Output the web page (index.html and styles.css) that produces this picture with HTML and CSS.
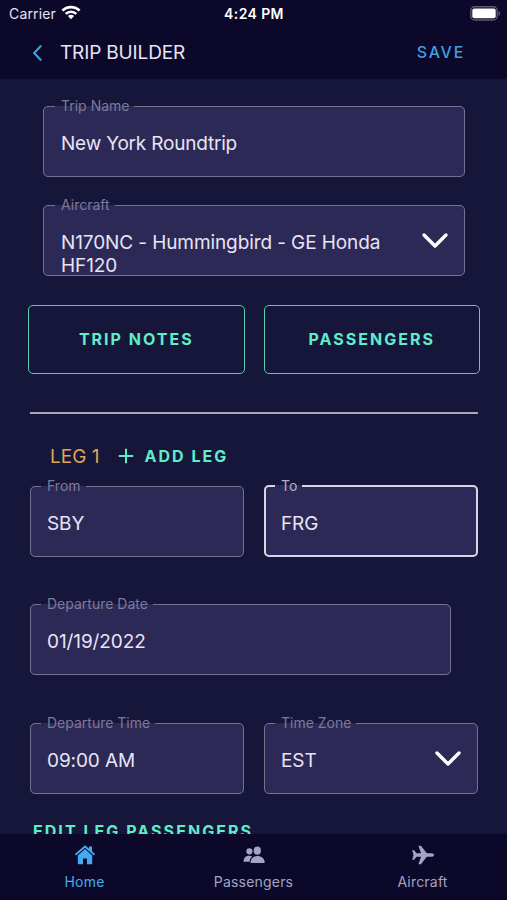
FILE: index.html
```html
<!DOCTYPE html>
<html lang="en">
<head>
<meta charset="utf-8">
<title>Trip Builder</title>
<link rel="stylesheet" href="styles.css">
</head>
<body>
<div class="app">
  <div class="status">
    <div class="carrier"><span>Carrier</span>
      <svg class="wifi" width="20" height="15" viewBox="0 0 20 15"><g fill="none" stroke="#fff" stroke-width="2.7"><path d="M1.400 5.600a12.300 12.300 0 0 1 17.200 0"/><path d="M4.700 8.900a7.600 7.600 0 0 1 10.600 0"/></g><path fill="#fff" d="M6.900 11.100a4.500 4.500 0 0 1 6.200 0L10 14.300z"/></svg>
    </div>
    <div class="clock">4:24 PM</div>
    <svg class="battery" width="31" height="15" viewBox="0 0 31 15"><rect x=".8" y=".8" width="26.400" height="13.200" rx="4" fill="none" stroke="#5c5a70" stroke-width="1.400"/><rect x="2.300" y="2.500" width="23.400" height="9.800" rx="2" fill="#fff"/><path d="M28.500 5v5c1-.5 1.600-1.400 1.600-2.500s-.6-2-1.600-2.500z" fill="#5c5a70"/></svg>
  </div>
  <header class="header">
    <svg class="back" width="12" height="18" viewBox="0 0 12 18"><path d="M10.200 1.500 3.200 9l7 7.500" fill="none" stroke="#3f9fe0" stroke-width="2.100"/></svg>
    <h1 class="title">TRIP BUILDER</h1>
    <span class="save">SAVE</span>
  </header>
  <main class="content">
    <div class="general">
      <fieldset class="field"><legend>Trip Name</legend><div class="value name">New York Roundtrip</div></fieldset>
      <fieldset class="field"><legend>Aircraft</legend><div class="value craft">N170NC - Hummingbird - GE Honda HF120</div>
        <svg class="chevron" width="28" height="18" viewBox="0 0 28 18"><path d="M3 3 14 14 25 3" fill="none" stroke="#fff" stroke-width="3.400" stroke-linecap="round" stroke-linejoin="round"/></svg></fieldset>
    </div>
    <div class="actions"><button class="btn notes">TRIP NOTES</button><button class="btn pax">PASSENGERS</button></div>
    <hr class="rule">
    <div class="leghead"><span class="leg">LEG 1</span>
      <svg class="plus" width="16" height="16" viewBox="0 0 16 16"><path d="M8 .8v14.400M.8 8h14.400" stroke="#5eeec6" stroke-width="2"/></svg>
      <span class="add">ADD LEG</span></div>
    <div class="row">
      <fieldset class="field"><legend>From</legend><div class="value">SBY</div></fieldset>
      <fieldset class="field focused"><legend>To</legend><div class="value">FRG</div></fieldset>
    </div>
    <div class="row single">
      <fieldset class="field"><legend>Departure Date</legend><div class="value date">01/19/2022</div></fieldset>
    </div>
    <div class="row">
      <fieldset class="field"><legend>Departure Time</legend><div class="value time">09:00 AM</div></fieldset>
      <fieldset class="field"><legend>Time Zone</legend><div class="value">EST</div>
        <svg class="chevron" width="28" height="18" viewBox="0 0 28 18"><path d="M3 3 14 14 25 3" fill="none" stroke="#fff" stroke-width="3.400" stroke-linecap="round" stroke-linejoin="round"/></svg></fieldset>
    </div>
    <div class="edit">EDIT LEG PASSENGERS</div>
  </main>
  <nav class="tabs">
    <div class="tab active">
      <svg width="22" height="20" viewBox="0 0 22 20"><path fill="currentColor" d="M11 4.100 18.200 10.500v7.900q0 .8-.8.8H13v-5.700H9v5.700H4.600q-.8 0-.8-.8v-7.900zM15 1.500h3v6l-3-2.700z"/><path d="M1.500 9.800 11 1.500l9.500 8.300" fill="none" stroke="currentColor" stroke-width="1.800"/></svg>
      <span>Home</span></div>
    <div class="tab">
      <svg width="22" height="20" viewBox="0 0 22 20"><g fill="currentColor"><circle cx="6.400" cy="6.300" r="3.100"/><path d="M.6 16.800c0-4 2-6.100 5.600-6.100 1.200 0 2.200.3 3 .8-1.700 1.200-2.500 3-2.500 5.300z"/><ellipse cx="14.300" cy="5.700" rx="3.600" ry="4.100"/><path d="M7.600 18c0-4.400 2.300-6.900 6.600-6.900s7.500 2.300 7.500 6.900z"/></g></svg>
      <span>Passengers</span></div>
    <div class="tab">
      <svg width="22" height="20" viewBox="0 0 22 20"><path fill="currentColor" d="M.2 5.300h1.900l2.400 2.900h4.500L6.400.7h2.500l5.900 7.500h4.500c1.700 0 2.700.8 2.700 1.800s-1 1.800-2.700 1.800h-4.500l-5.900 7.500H6.400l2.600-7.500H4.500l-2.400 2.900H.2L1.500 10z"/></svg>
      <span>Aircraft</span></div>
  </nav>
</div>
</body>
</html>
```
FILE: styles.css
```css
* { box-sizing: border-box; }
body { margin: 0; font-family: Inter, "Liberation Sans", sans-serif; background: #16153a; color: #e6e4f5; }
.app { display: flex; flex-direction: column; width: 507px; height: 900px; overflow: hidden; }
.status { display: grid; grid-template-columns: 1fr auto 1fr; align-items: center; height: 26px; padding: 0 6px 0 9px; background: #0c0829; }
.carrier { display: flex; align-items: center; gap: 6px; font-size: 14px; line-height: 18px; letter-spacing: .15px; padding-top: 2px; }
.wifi { margin: -3px 0 0 -1px; }
.clock { font-size: 14px; font-weight: 600; line-height: 18px; color: #fff; letter-spacing: .4px; padding-top: 2px; margin-left: -2px; }
.battery { justify-self: end; }
.header { display: flex; align-items: center; height: 53px; padding: 0 42px 0 31px; background: #0c0829; }
.title { margin: 0 0 0 17px; font-size: 19px; line-height: 24px; font-weight: 400; letter-spacing: -.15px; }
.save { margin: -2px 0 0 auto; font-size: 16px; font-weight: 500; letter-spacing: 1.700px; color: #3f9fe0; }
.content { flex: 1; min-height: 0; overflow: hidden; padding: 19px 27px 0 28px; }
.general { display: flex; flex-direction: column; gap: 20px; padding: 0 15px; }
.field { position: relative; display: block; min-width: 0; width: 100%; height: 79px; margin: 0; padding: 0 17px; border: 1px solid #757290; border-radius: 5px; background: #2d2957; }
.field legend { height: 16px; margin-left: -6px; padding: 0 5px 0 6px; font-size: 14px; line-height: 16px; letter-spacing: 0; color: #7d7a99; }
.value { padding-top: 18px; font-size: 19px; line-height: 23px; letter-spacing: -.1px; white-space: nowrap; }
.general .name { letter-spacing: -.2px; }
.craft { white-space: normal; width: 335px; }
.chevron { position: absolute; right: 15px; top: 19px; }
.row .field { padding: 0 16px; }
.row .focused { padding: 0 15px; border: 2px solid #d7d5e5; }
.focused legend { color: #b3b1c8; }
.actions { display: flex; gap: 19px; margin-top: 29px; }
.btn { flex: 1; height: 69px; padding: 0 0 2px; border: 1px solid #55cdb3; border-radius: 5px; background: transparent; color: #5eeec6; font: 700 16px/20px Inter, sans-serif; letter-spacing: 2px; }
.rule { height: 2px; margin: 38px 2px 0; border: 0; background: #a9a7bb; }
.leghead { display: flex; align-items: center; height: 24px; margin: 30px 0 10px 22px; }
.leg { font-size: 19px; color: #dda650; }
.plus { margin: 0 10px 0 19px; }
.add, .edit { color: #5eeec6; font-size: 16px; font-weight: 700; letter-spacing: 2.050px; }
.row { display: grid; grid-template-columns: 214px 214px; gap: 20px; padding-left: 2px; margin-bottom: 39px; }
.row.single { grid-template-columns: 421px; margin-bottom: 40px; }
.edit { margin: -12px 0 0 5px; line-height: 20px; }
.tabs { display: grid; grid-template-columns: repeat(3, 1fr); height: 66px; background: #0c0829; color: #a4a3c4; }
.tab { display: flex; flex-direction: column; align-items: center; padding-top: 11px; gap: 8px; font-size: 14px; line-height: 18px; letter-spacing: .2px; }
.tab.active { color: #43aaf0; }
```
